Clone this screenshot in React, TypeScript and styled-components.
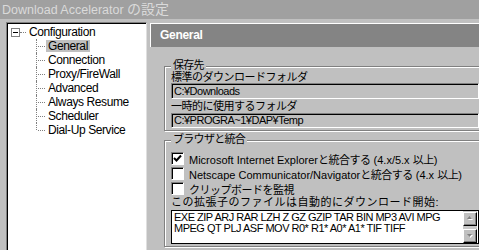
import React from 'react';
import styled, { createGlobalStyle } from 'styled-components';

const Global = createGlobalStyle`
  html, body { margin: 0; padding: 0; }
  body {
    width: 479px;
    height: 250px;
    overflow: hidden;
    background: #c0c0c0;
    font-family: "Liberation Sans", "Noto Sans CJK JP", sans-serif;
    font-size: 11px;
    color: #000;
  }
`;

const Window = styled.div`
  width: 479px;
  height: 250px;
  display: flex;
  flex-direction: column;
  overflow: hidden;
`;

const TitleBar = styled.div`
  height: 19px;
  flex: none;
  background: #a0a0a0;
  color: #dadada;
  font-size: 12.5px;
  letter-spacing: 0;
  line-height: 19px;
  padding-left: 2px;
  white-space: nowrap;
`;

const TitleJp = styled.span`
  font-size: 14px;
  letter-spacing: 0;
`;

const Jp = styled.span`
  letter-spacing: -0.5px;
`;

const Main = styled.div`
  flex: 1;
  display: flex;
  min-height: 0;
`;

const TreePanel = styled.div`
  flex: none;
  width: 141px;
  height: 240px;
  margin: 3px 0 0 6px;
  box-sizing: border-box;
  background: #fff;
  border-top: 1px solid #808080;
  border-left: 1px solid #808080;
  border-right: 1px solid #dfdfdf;
  box-shadow: inset 1px 1px 0 #000;
  padding-top: 2px;
  font-size: 12px;
  letter-spacing: -0.4px;
`;

const TreeRow = styled.div<{ $child?: boolean; $last?: boolean }>`
  position: relative;
  height: 14px;
  line-height: 14px;
  padding-left: ${p => (p.$child ? 39 : 20)}px;
  white-space: nowrap;
  &::before {
    content: '';
    display: ${p => (p.$child ? 'block' : 'none')};
    position: absolute;
    left: 29px;
    top: 0;
    height: ${p => (p.$last ? 7 : 14)}px;
    border-left: 1px dotted #808080;
  }
  &::after {
    content: '';
    position: absolute;
    left: ${p => (p.$child ? 31 : 13)}px;
    top: 7px;
    width: ${p => (p.$child ? 7 : 6)}px;
    border-top: 1px dotted #808080;
  }
`;

const ExpandBox = styled.span`
  position: absolute;
  left: 4px;
  top: 3px;
  width: 9px;
  height: 9px;
  box-sizing: border-box;
  border: 1px solid #808080;
  background: #fff;
  &::after {
    content: '';
    position: absolute;
    left: 1px;
    top: 3px;
    width: 5px;
    height: 1px;
    background: #000;
  }
`;

const TreeLabel = styled.span<{ $selected?: boolean }>`
  display: inline-block;
  line-height: 12px;
  padding: 0 2px;
  background: ${p => (p.$selected ? '#c0c0c0' : 'transparent')};
`;

const Content = styled.div`
  flex: none;
  width: 340px;
  margin: 4px 0 0 3px;
  display: flex;
  flex-direction: column;
`;

const Header = styled.div`
  height: 24px;
  box-sizing: border-box;
  border-top: 1px solid #fff;
  border-left: 1px solid #fff;
  background: #848484;
  color: #fff;
  font-weight: bold;
  font-size: 12px;
  letter-spacing: -0.3px;
  line-height: 22px;
  padding-left: 9px;
`;

const Group = styled.div<{ $top: number }>`
  margin: ${p => p.$top}px 0 0 14px;
  width: 340px;
  border: 1px solid #808080;
  box-shadow: inset 1px 1px 0 #fff, 1px 1px 0 #fff;
  padding: 0 0 2px 6px;
`;

const Legend = styled.div`
  display: table;
  margin: -8px 0 0 0;
  padding: 0 2px;
  background: #c0c0c0;
  line-height: 13px;
  font-size: 11px;
  letter-spacing: -0.7px;
`;

const FieldLabel = styled.div<{ $h: number; $ls?: number }>`
  height: ${p => p.$h}px;
  line-height: ${p => p.$h}px;
  font-size: 11px;
  letter-spacing: ${p => p.$ls ?? -0.5}px;
  white-space: nowrap;
`;

const Field = styled.div<{ $h: number }>`
  width: 308px;
  height: ${p => p.$h}px;
  box-sizing: border-box;
  border: 1px solid;
  border-color: #808080 #fff #fff #808080;
  box-shadow: inset 1px 1px 0 #000;
  background: #c0c0c0;
  line-height: ${p => p.$h - 2}px;
  padding-left: 2px;
  font-size: 11px;
  letter-spacing: -0.5px;
  white-space: nowrap;
`;

const CheckRow = styled.div`
  display: flex;
  align-items: center;
  height: 15px;
  gap: 5px;
  white-space: nowrap;
  font-size: 11px;
`;

const Box = styled.span`
  flex: none;
  width: 13px;
  height: 13px;
  box-sizing: border-box;
  border: 1px solid;
  border-color: #808080 #fff #fff #808080;
  box-shadow: inset 1px 1px 0 #000;
  background: #fff;
  display: flex;
  align-items: center;
  justify-content: center;
`;

const ExtArea = styled.div`
  width: 308px;
  height: 34px;
  box-sizing: border-box;
  border: 1px solid #000;
  background: #fff;
  display: flex;
  margin-top: 1px;
`;

const ExtText = styled.div`
  flex: 1;
  padding: 1px 0 0 2px;
  line-height: 11px;
  font-size: 11px;
  letter-spacing: -0.5px;
  white-space: pre;
`;

const ScrollCol = styled.div`
  flex: none;
  width: 14px;
  margin-right: 1px;
  padding-top: 1px;
  display: flex;
  flex-direction: column;
  justify-content: space-between;
  background: #c8c8c8;
`;

const ScrollBtn = styled.div`
  width: 14px;
  height: 14px;
  box-sizing: border-box;
  background: #c0c0c0;
  border: 1px solid;
  border-color: #fff #000 #000 #fff;
  box-shadow: inset -1px -1px 0 #808080;
  display: flex;
  align-items: center;
  justify-content: center;
`;

const Arrow = ({ down }: { down?: boolean }) => (
  <svg width="8" height="6" viewBox="0 0 8 6">
    {down ? (
      <>
        <polygon points="2,2 7,2 4.5,5" fill="#fff" />
        <polygon points="1,1 6,1 3.5,4" fill="#808080" />
      </>
    ) : (
      <>
        <polygon points="4.5,1 7,4 2,4" fill="#fff" />
        <polygon points="3.5,0 6,3 1,3" fill="#808080" />
      </>
    )}
  </svg>
);

const CheckMark = () => (
  <svg width="9" height="9" viewBox="0 0 9 9">
    <polyline points="1,4 3.5,6.5 8,1.5" fill="none" stroke="#000" strokeWidth="2" />
  </svg>
);

const items = ['General', 'Connection', 'Proxy/FireWall', 'Advanced', 'Always Resume', 'Scheduler', 'Dial-Up Service'];

export default function App() {
  return (
    <>
      <Global />
      <Window>
        <TitleBar>Download Accelerator <TitleJp>の設定</TitleJp></TitleBar>
        <Main>
          <TreePanel>
            <TreeRow>
              <ExpandBox />
              <TreeLabel>Configuration</TreeLabel>
            </TreeRow>
            {items.map((it, i) => (
              <TreeRow key={it} $child $last={i === items.length - 1}>
                <TreeLabel $selected={i === 0}>{it}</TreeLabel>
              </TreeRow>
            ))}
          </TreePanel>
          <Content>
            <Header>General</Header>
            <Group $top={19}>
              <Legend>保存先</Legend>
              <FieldLabel $h={11}>標準のダウンロードフォルダ</FieldLabel>
              <Field $h={16}>C:¥Downloads</Field>
              <FieldLabel $h={14}>一時的に使用するフォルダ</FieldLabel>
              <Field $h={15}>C:¥PROGRA~1¥DAP¥Temp</Field>
            </Group>
            <Group $top={9}>
              <Legend>ブラウザと統合</Legend>
              <div style={{ height: 5 }} />
              <CheckRow>
                <Box><CheckMark /></Box>
                <span>Microsoft Internet Explorer<Jp>と統合する</Jp> (4.x/5.x <Jp>以上</Jp>)</span>
              </CheckRow>
              <CheckRow>
                <Box />
                <span>Netscape Communicator/Navigator<Jp>と統合する</Jp> (4.x <Jp>以上</Jp>)</span>
              </CheckRow>
              <CheckRow>
                <Box />
                <Jp>クリップボードを監視</Jp>
              </CheckRow>
              <FieldLabel $h={13} $ls={0.5}>この拡張子のファイルは自動的にダウンロード開始:</FieldLabel>
              <ExtArea>
                <ExtText>{'EXE ZIP ARJ RAR LZH Z GZ GZIP TAR BIN MP3 AVI MPG\nMPEG QT PLJ ASF MOV R0* R1* A0* A1* TIF TIFF'}</ExtText>
                <ScrollCol>
                  <ScrollBtn><Arrow /></ScrollBtn>
                  <ScrollBtn><Arrow down /></ScrollBtn>
                </ScrollCol>
              </ExtArea>
            </Group>
          </Content>
        </Main>
      </Window>
    </>
  );
}
